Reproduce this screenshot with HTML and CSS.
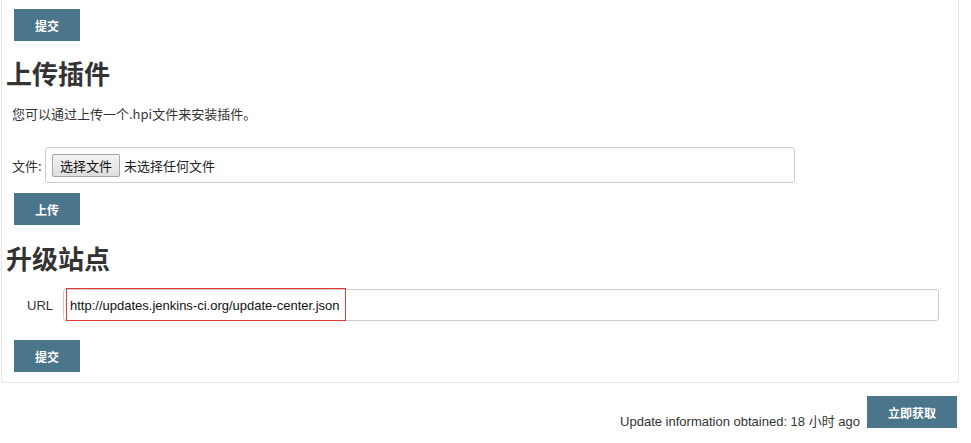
FILE: index.html
```html
<!DOCTYPE html>
<html lang="zh-CN">
<head>
<meta charset="utf-8">
<title>插件管理 - 高级</title>
<link rel="stylesheet" href="styles.css">
</head>
<body>
<div class="panel">
  <div class="actions"><button class="btn" type="button">提交</button></div>
  <h2 class="title">上传插件</h2>
  <p class="hint">您可以通过上传一个.hpi文件来安装插件。</p>
  <div class="file-row">
    <span class="label">文件:</span>
    <div class="file-box">
      <span class="choose">选择文件</span>
      <span class="none">未选择任何文件</span>
    </div>
  </div>
  <div class="actions"><button class="btn" type="button">上传</button></div>
  <h2 class="title title-2">升级站点</h2>
  <div class="url-row">
    <span class="label url-label">URL</span>
    <div class="url-box">
      <span class="url-text">http://updates.jenkins-ci.org/update-center.json</span>
      <span class="mark"></span>
    </div>
  </div>
  <div class="actions actions-last"><button class="btn" type="button">提交</button></div>
</div>
<div class="footer">
  <span class="info">Update information obtained: 18 小时 ago</span>
  <button class="btn btn-wide" type="button">立即获取</button>
</div>
</body>
</html>
```
FILE: styles.css
```css
html, body {
  margin: 0;
  padding: 0;
  background: #ffffff;
}
body {
  font-family: "Liberation Sans", Arial, "Noto Sans CJK SC", sans-serif;
  font-size: 13px;
  color: #333333;
  width: 971px;
  height: 443px;
  overflow: hidden;
}
.panel {
  margin-left: 1px;
  width: 952px;
  border: 1px solid #e6e6e6;
  border-top: none;
  border-radius: 0 0 4px 4px;
  padding: 9px 0 10px 4px;
}
.actions {
  padding-left: 8px;
  display: flex;
}
.btn {
  display: inline-flex;
  align-items: center;
  justify-content: center;
  box-sizing: border-box;
  width: 66px;
  height: 32px;
  margin: 0;
  border: 1px solid #4b758b;
  border-radius: 0;
  background: #4b758b;
  color: #ffffff;
  font-family: "Noto Sans CJK SC", sans-serif;
  font-size: 12px;
  font-weight: bold;
  padding: 0;
}
.btn-wide {
  width: 90px;
}
.title {
  margin: 17px 0 0 0;
  font-family: "Noto Sans CJK SC", sans-serif;
  font-size: 26px;
  line-height: 30px;
  font-weight: bold;
  color: #333333;
}
.title-2 {
  margin-top: 18px;
}
.hint {
  margin: 17px 0 0 6px;
  line-height: 18px;
  font-family: "Noto Sans CJK SC", sans-serif;
}
.file-row {
  margin-top: 24px;
  display: flex;
  align-items: center;
  padding-left: 6px;
  margin-bottom: 10px;
}
.label {
  font-family: "Noto Sans CJK SC", sans-serif;
  width: 33px;
}
.file-box {
  box-sizing: border-box;
  width: 750px;
  height: 36px;
  border: 1px solid #cccccc;
  border-radius: 3px;
  display: flex;
  align-items: center;
  padding-left: 6px;
  gap: 4px;
  font-family: "Noto Sans CJK SC", sans-serif;
}
.choose {
  box-sizing: border-box;
  width: 68px;
  height: 23px;
  border: 1px solid #a6a6a6;
  border-radius: 2px;
  background: linear-gradient(#f4f4f4, #dedede);
  display: flex;
  align-items: center;
  justify-content: center;
  color: #111111;
}
.none {
  color: #222222;
}
.url-row {
  margin-top: 16px;
  display: flex;
  align-items: center;
  padding-left: 21px;
  margin-bottom: 19px;
}
.url-label {
  width: 36px;
  font-family: "Liberation Sans", Arial, sans-serif;
  font-size: 13px;
  color: #333333;
}
.url-box {
  position: relative;
  box-sizing: border-box;
  width: 876px;
  height: 32px;
  border: 1px solid #cccccc;
  border-radius: 3px;
  display: flex;
  align-items: center;
  padding-left: 6px;
}
.url-text {
  font-family: "Liberation Sans", Arial, sans-serif;
  font-size: 13px;
  color: #111111;
}
.mark {
  position: absolute;
  left: 2px;
  top: -2px;
  width: 280px;
  height: 33px;
  box-sizing: border-box;
  border: 1px solid #e53935;
}
.footer {
  display: flex;
  justify-content: flex-end;
  align-items: flex-end;
  margin-top: 13px;
  padding-right: 14px;
  gap: 7px;
}
.info {
  font-size: 13px;
  color: #333333;
  line-height: 16px;
  margin-bottom: -2px;
}
```
